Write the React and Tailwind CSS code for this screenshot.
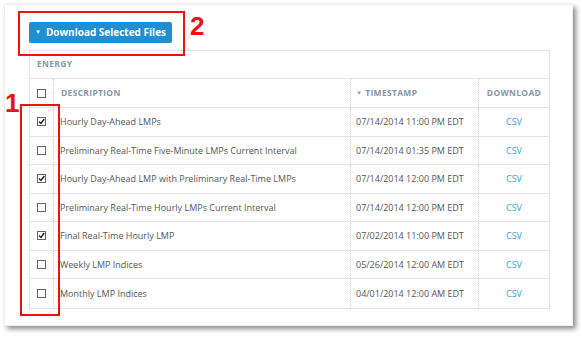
import React from 'react';

const rows = [
  { name: 'Hourly Day-Ahead LMPs', time: '07/14/2014 11:00 PM EDT', checked: true },
  { name: 'Preliminary Real-Time Five-Minute LMPs Current Interval', time: '07/14/2014 01:35 PM EDT', checked: false },
  { name: 'Hourly Day-Ahead LMP with Preliminary Real-Time LMPs', time: '07/14/2014 12:00 PM EDT', checked: true },
  { name: 'Preliminary Real-Time Hourly LMPs Current Interval', time: '07/14/2014 12:00 PM EDT', checked: false },
  { name: 'Final Real-Time Hourly LMP', time: '07/02/2014 11:00 PM EDT', checked: true },
  { name: 'Weekly LMP Indices', time: '05/26/2014 12:00 AM EDT', checked: false },
  { name: 'Monthly LMP Indices', time: '04/01/2014 12:00 AM EDT', checked: false },
];

const Box = ({ checked }) => (
  <div className="w-[9px] h-[9px] border border-[#666] bg-white flex items-center justify-center">
    {checked && (
      <svg width="7" height="7" viewBox="0 0 7 7">
        <path d="M1 3.5 L3 5.5 L6.2 1" stroke="#222" strokeWidth="1.4" fill="none" />
      </svg>
    )}
  </div>
);

const App = () => {
  return (
    <div className="w-[583px] h-[337px] bg-white relative font-['Open_Sans',sans-serif]">
      <div className="absolute left-[4px] top-[4px] w-[569px] h-[322px] bg-white shadow-[3px_3px_5px_rgba(0,0,0,0.45)] border border-[#eee]">
        <div className="pl-[24px] pt-[17px]">
          <button className="h-[21px] w-[143px] bg-[#1f8fd2] rounded-[2px] flex items-center justify-center gap-[5px] text-white text-[10px] font-bold">
            <span className="text-[6px]">▼</span>
            Download Selected Files
          </button>

          <div className="mt-[7px] w-[521px] border border-[#e3e3e3] text-[9px] text-[#555]">
            <div className="h-[28px] border-b border-[#e3e3e3] flex items-center pl-[7px] text-[8.5px] font-bold text-[#8497a8] tracking-[0.3px]">
              ENERGY
            </div>
            <div className="h-[29px] flex border-b border-[#e3e3e3] text-[8.5px] font-bold text-[#8497a8] tracking-[0.3px]">
              <div className="w-[24px] flex items-center justify-center border-r border-dotted border-[#ccc]">
                <Box checked={false} />
              </div>
              <div className="w-[297px] flex items-center pl-[7px] border-r border-dotted border-[#ccc]">DESCRIPTION</div>
              <div className="w-[128px] flex items-center pl-[5px] gap-[3px] border-r border-dotted border-[#ccc]">
                <span className="text-[6px] text-[#5fb0e0]">▼</span>TIMESTAMP
              </div>
              <div className="flex-1 flex items-center justify-center">DOWNLOAD</div>
            </div>
            {rows.map((r, i) => (
              <div
                key={i}
                className={`h-[28.5px] flex ${i < rows.length - 1 ? 'border-b border-[#e3e3e3]' : ''}`}
              >
                <div className="w-[24px] flex items-center justify-center border-r border-dotted border-[#ccc]">
                  <Box checked={r.checked} />
                </div>
                <div className="w-[297px] flex items-center pl-[6px] border-r border-dotted border-[#ccc] whitespace-nowrap">
                  {r.name}
                </div>
                <div className="w-[128px] flex items-center pl-[5px] border-r border-dotted border-[#ccc] whitespace-nowrap">
                  {r.time}
                </div>
                <div className="flex-1 flex items-center justify-center text-[#3a9fd9]">CSV</div>
              </div>
            ))}
          </div>
        </div>
      </div>

      {/* annotations */}
      <div className="absolute left-[18px] top-[11px] w-[167px] h-[45px] border-[2px] border-[#ee1111]" />
      <div className="absolute left-[190px] top-[13px] text-[26px] leading-none font-bold text-[#ee1111] font-['Liberation_Sans',sans-serif]">2</div>
      <div className="absolute left-[20px] top-[104px] w-[40px] h-[212px] border-[2px] border-[#ee1111]" />
      <div className="absolute left-[5px] top-[90px] text-[26px] leading-none font-bold text-[#ee1111] font-['Liberation_Sans',sans-serif]">1</div>
    </div>
  );
};

export default App;
